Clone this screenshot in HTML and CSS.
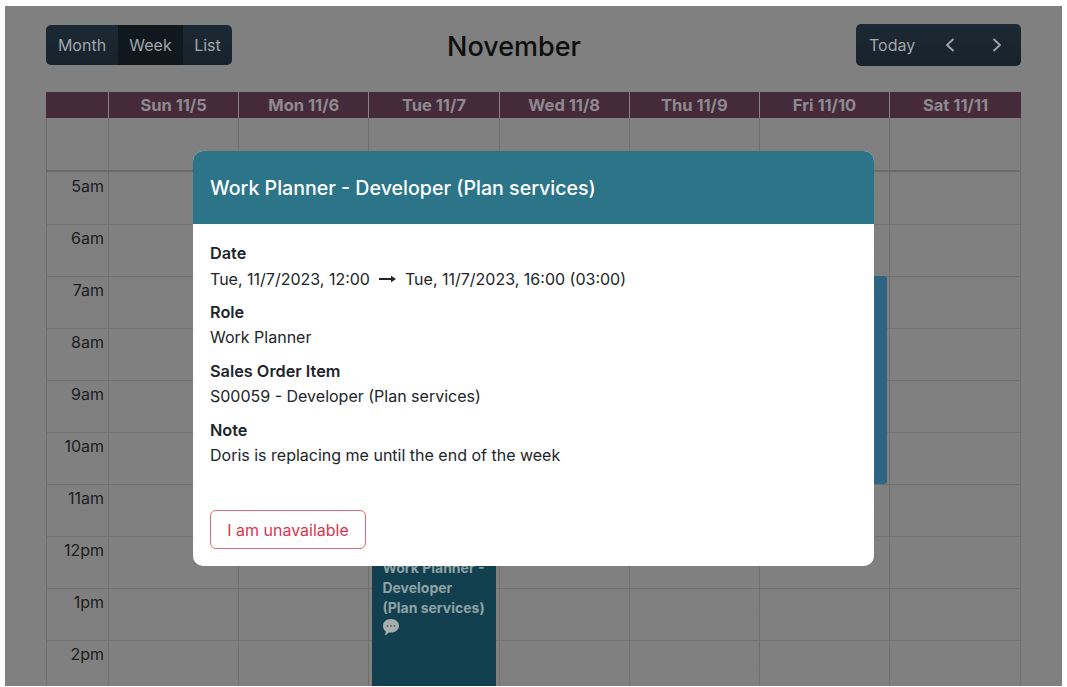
FILE: index.html
```html
<!DOCTYPE html>
<html lang="en">
<head>
<meta charset="utf-8">
<title>November</title>
<link rel="stylesheet" href="styles.css">
</head>
<body>
<div class="frame">
  <div class="toolbar">
    <div class="views">
      <span class="view">Month</span>
      <span class="view active">Week</span>
      <span class="view">List</span>
    </div>
    <h1 class="title">November</h1>
    <div class="nav">
      <span class="today">Today</span>
      <svg class="chev" viewBox="0 0 10 14" width="10" height="14"><path d="M8.500 1 L2 7 L8.500 13"/></svg>
      <svg class="chev" viewBox="0 0 10 14" width="10" height="14"><path d="M1.500 1 L8 7 L1.500 13"/></svg>
    </div>
  </div>

  <div class="cal-row cal-head">
    <div class="hcell"></div>
    <div class="hcell">Sun 11/5</div>
    <div class="hcell">Mon 11/6</div>
    <div class="hcell">Tue 11/7</div>
    <div class="hcell">Wed 11/8</div>
    <div class="hcell">Thu 11/9</div>
    <div class="hcell">Fri 11/10</div>
    <div class="hcell">Sat 11/11</div>
  </div>
  <div class="cal-row cal-allday">
    <div class="acell"></div><div class="acell"></div><div class="acell"></div><div class="acell"></div>
    <div class="acell"></div><div class="acell"></div><div class="acell"></div><div class="acell"></div>
  </div>
  <div class="cal-row cal-body">
    <div class="col times">
      <div class="slot">5am</div><div class="slot">6am</div><div class="slot">7am</div><div class="slot">8am</div>
      <div class="slot">9am</div><div class="slot">10am</div><div class="slot">11am</div><div class="slot">12pm</div>
      <div class="slot">1pm</div><div class="slot">2pm</div>
    </div>
    <div class="col"><div class="slot"></div><div class="slot"></div><div class="slot"></div><div class="slot"></div><div class="slot"></div><div class="slot"></div><div class="slot"></div><div class="slot"></div><div class="slot"></div><div class="slot"></div></div>
    <div class="col"><div class="slot"></div><div class="slot"></div><div class="slot"></div><div class="slot"></div><div class="slot"></div><div class="slot"></div><div class="slot"></div><div class="slot"></div><div class="slot"></div><div class="slot"></div></div>
    <div class="col">
      <div class="slot"></div><div class="slot"></div><div class="slot"></div><div class="slot"></div><div class="slot"></div><div class="slot"></div><div class="slot"></div><div class="slot"></div><div class="slot"></div><div class="slot"></div>
      <div class="event event-tue">
        <div class="event-time">12:00 - 16:00</div>
        <div>Work Planner - Developer (Plan services)</div>
        <svg class="bubble" viewBox="0 0 18 18" width="18" height="18"><path d="M9 1c4.600 0 8 2.900 8 6.800s-3.400 6.800-8 6.800c-.8 0-1.500-.1-2.200-.2C5.500 16 3.800 17 2.500 17c.8-.9 1.300-2 1.400-3.300C2.100 12.400 1 10.300 1 7.800 1 3.900 4.400 1 9 1z"/><circle class="dot" cx="5.500" cy="8" r="1"/><circle class="dot" cx="9" cy="8" r="1"/><circle class="dot" cx="12.500" cy="8" r="1"/></svg>
      </div>
    </div>
    <div class="col"><div class="slot"></div><div class="slot"></div><div class="slot"></div><div class="slot"></div><div class="slot"></div><div class="slot"></div><div class="slot"></div><div class="slot"></div><div class="slot"></div><div class="slot"></div></div>
    <div class="col"><div class="slot"></div><div class="slot"></div><div class="slot"></div><div class="slot"></div><div class="slot"></div><div class="slot"></div><div class="slot"></div><div class="slot"></div><div class="slot"></div><div class="slot"></div></div>
    <div class="col">
      <div class="slot"></div><div class="slot"></div><div class="slot"></div><div class="slot"></div><div class="slot"></div><div class="slot"></div><div class="slot"></div><div class="slot"></div><div class="slot"></div><div class="slot"></div>
      <div class="event event-fri"></div>
    </div>
    <div class="col"><div class="slot"></div><div class="slot"></div><div class="slot"></div><div class="slot"></div><div class="slot"></div><div class="slot"></div><div class="slot"></div><div class="slot"></div><div class="slot"></div><div class="slot"></div></div>
  </div>

  <div class="modal">
    <div class="modal-head">Work Planner - Developer (Plan services)</div>
    <div class="modal-body">
      <div class="field">
        <div class="label">Date</div>
        <div class="value date-value"><span>Tue, 11/7/2023, 12:00</span>
          <svg class="arrow" viewBox="0 0 17 10" width="17" height="10"><path d="M0 5H14"/><path class="arrow-head" d="M12 1.800 L17 5 L12 8.200Z"/></svg>
          <span>Tue, 11/7/2023, 16:00 (03:00)</span></div>
      </div>
      <div class="field">
        <div class="label">Role</div>
        <div class="value">Work Planner</div>
      </div>
      <div class="field">
        <div class="label">Sales Order Item</div>
        <div class="value">S00059 - Developer (Plan services)</div>
      </div>
      <div class="field">
        <div class="label">Note</div>
        <div class="value">Doris is replacing me until the end of the week</div>
      </div>
      <button class="unavailable" type="button">I am unavailable</button>
    </div>
  </div>
</div>
</body>
</html>
```
FILE: styles.css
```css
* { box-sizing: border-box; }
html, body { margin: 0; height: 100%; background: #fff; }
body {
  padding: 6px 5px 1px 5px;
  font-family: Inter, "Liberation Sans", sans-serif;
  overflow: hidden;
}
.frame {
  position: relative;
  height: 680px;
  overflow: hidden;
  background: #808080;
  padding: 18px 41px 0 41px;
}
.toolbar {
  position: relative;
  display: flex;
  align-items: center;
  justify-content: space-between;
  height: 42px;
  margin-bottom: 26px;
}
.views {
  display: flex;
  height: 40px;
  margin-top: -1px;
  border-radius: 5px;
  overflow: hidden;
  background: linear-gradient(#1c2833, #17222b);
}
.view {
  display: flex;
  align-items: center;
  justify-content: center;
  font-size: 16px;
  color: #a1a6aa;
}
.view:nth-child(1) { width: 72px; }
.view:nth-child(2) { width: 65px; }
.view:nth-child(3) { width: 49px; }
.view.active { background: #10181e; }
.title {
  margin: 0;
  position: absolute;
  left: 401px;
  top: 5px;
  font-size: 27px;
  line-height: 36px;
  font-weight: 500;
  color: #0e0e0e;
}
.nav {
  display: flex;
  align-items: center;
  width: 165px;
  height: 42px;
  padding-left: 13px;
  border-radius: 5px;
  background: linear-gradient(#1c2833, #17222b);
  color: #a1a6aa;
  font-size: 16px;
}
.today { width: 76px; }
.chev { margin-right: 37px; flex: none; }
.chev:last-child { margin-right: 0; }
.chev path { fill: none; stroke: #a1a6aa; stroke-width: 1.800; }

.cal-row {
  display: grid;
  grid-template-columns: 62px repeat(6, 130.2px) 1fr;
  width: 975px;
}
.cal-head { height: 26px; background: #452a3a; }
.hcell {
  display: flex;
  align-items: center;
  justify-content: center;
  font-size: 16.500px;
  font-weight: 700;
  color: #8f8a90;
}
.hcell + .hcell { border-left: 1px solid #878087; }
.cal-allday { height: 54px; border-bottom: 2px solid #6c6c6c; }
.acell { border-left: 1px solid #6f6f6f; }
.acell:last-child { border-right: 1px solid #6f6f6f; }
.col { position: relative; border-left: 1px solid #6f6f6f; }
.col:last-child { border-right: 1px solid #6f6f6f; }
.slot {
  height: 52px;
  border-bottom: 1px solid #717171;
  background: linear-gradient(#7e7e7e, #7e7e7e) 0 25px / 100% 1px no-repeat;
}
.slot:first-child { height: 53px; background-position: 0 26px; }
.times .slot {
  padding: 3px 4px 0 0;
  text-align: right;
  font-size: 16px;
  line-height: 20px;
  color: #1c1c1c;
}
.times .slot:first-child { padding-top: 4px; }
.event {
  position: absolute;
  border-radius: 3px;
  font-size: 14px;
  line-height: 20px;
  font-weight: 700;
  color: #8fa2a8;
}
.event-tue {
  left: 3px;
  right: 3px;
  top: 361px;
  height: 208px;
  padding: 5px 10px;
  background: #113f4d;
}
.event-time { height: 20px; }
.bubble { display: block; }
.bubble path { fill: #a6aeb0; }
.bubble .dot { fill: #5d6668; }
.event-fri {
  left: 3px;
  right: 2px;
  top: 104px;
  height: 208px;
  background: #2c6483;
}

.modal {
  position: absolute;
  left: 188px;
  top: 145px;
  width: 681px;
  height: 415px;
  border-radius: 10px;
  overflow: hidden;
  background: #fff;
}
.modal-head {
  height: 73px;
  padding: 0 17px;
  display: flex;
  align-items: center;
  background: #2c7488;
  color: #fff;
  font-size: 19.600px;
  font-weight: 500;
}
.modal-body { padding: 17px; color: #212529; font-size: 16px; line-height: 25px; }
.field { margin-bottom: 9px; }
.label { font-weight: 600; font-size: 16.300px; }
.date-value {
  display: flex;
  align-items: flex-start;
  gap: 9px;
  height: 25px;
  line-height: 27px;
  white-space: nowrap;
}
.arrow { align-self: center; flex: none; }
.arrow path { fill: none; stroke: #212529; stroke-width: 2; }
.arrow .arrow-head { fill: #212529; stroke: none; }
.unavailable {
  display: block;
  width: 156px;
  height: 39px;
  margin-top: 42px;
  padding: 0;
  background: #fff;
  border: 1px solid #e0687c;
  border-radius: 6px;
  color: #d8364f;
  font: 16px Inter, "Liberation Sans", sans-serif;
}
```
